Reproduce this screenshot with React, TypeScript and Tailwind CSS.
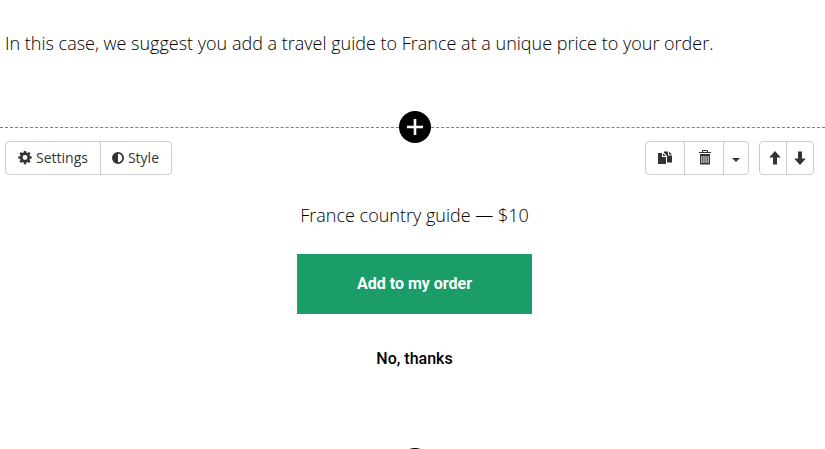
import type { ReactNode } from "react";

const shell =
  "flex h-[34px] items-stretch divide-x divide-[#cccccc] overflow-hidden rounded border border-[#cccccc] bg-white text-[#333333]";

function ToolButton({ label, width, children }: { label: string; width: string; children: ReactNode }) {
  return (
    <button type="button" aria-label={label} className={`flex items-center justify-center hover:bg-gray-100 ${width}`}>
      {children}
    </button>
  );
}

function Divider() {
  return (
    <div className="relative w-full border-t border-dashed border-[#808080]">
      <button
        type="button"
        aria-label="Add element"
        className="absolute -top-[17px] left-1/2 ml-[2px] flex size-8 -translate-x-1/2 items-center justify-center rounded-full bg-black"
      >
        <svg viewBox="0 0 16 16" className="size-4" fill="#fff">
          <path d="M6.700 0h2.600v6.700H16v2.600H9.300V16H6.700V9.300H0V6.700h6.700z" />
        </svg>
      </button>
    </div>
  );
}

function CogIcon() {
  const teeth = [0, 45, 90, 135, 180, 225, 270, 315];
  return (
    <svg viewBox="0 0 14 14" className="size-[14px]">
      <circle cx="7" cy="6.500" r="3.700" fill="none" stroke="currentColor" strokeWidth="2.500" />
      {teeth.map((a) => (
        <path key={a} d="M5.900 -0.200h2.200l.5 2.500H5.400z" fill="currentColor" transform={`rotate(${a} 7 6.500)`} />
      ))}
    </svg>
  );
}

function ContrastIcon() {
  return (
    <svg viewBox="0 0 14 14" className="size-[14px]">
      <circle cx="7" cy="7" r="5.100" fill="none" stroke="currentColor" strokeWidth="1.800" />
      <path d="M7 2a5 5 0 0 0 0 10z" fill="currentColor" />
    </svg>
  );
}

function CopyIcon() {
  return (
    <svg viewBox="0 0 16 14" className="h-[14px] w-4" fill="currentColor">
      <path d="M1 2h4v4h4v7H1z" />
      <path d="M6 2.300 8.700 5H6z" />
      <path d="M7 0.500h4v4h4V11.500h-5V4.800L7 1.800z" />
      <path d="M12 0.500 15 3.500h-3z" />
    </svg>
  );
}

function TrashIcon() {
  return (
    <svg viewBox="0 0 14 16" className="-mt-[3px] h-4 w-[14px]" fill="currentColor">
      <path d="M4 2Q4 1 5 1h4q1 0 1 1v1h3v1H1V3h3zM5 2v1h4V2z" fillRule="evenodd" />
      <path
        d="M2 5h10v10q0 .5-.6.5H2.600Q2 15.500 2 15zM3.400 7v7h.9V7zM5.500 7v7h.9V7zM7.600 7v7h.9V7zM9.700 7v7h.9V7z"
        fillRule="evenodd"
      />
    </svg>
  );
}

function ArrowIcon({ down = false }: { down?: boolean }) {
  return (
    <svg viewBox="0 0 12 14" className={`h-[14px] w-3 ${down ? "rotate-180" : ""}`} fill="currentColor">
      <path d="M6 0 11.800 6.500H8V13.500H4V6.500H0.200z" />
    </svg>
  );
}

export default function App() {
  return (
    <main className="flex h-screen flex-col overflow-hidden bg-white font-['Open_Sans','Noto_Sans',sans-serif] text-black">
      <p className="px-[5px] pt-[30px] pb-[70px] text-lg leading-[27px] font-light">
        In this case, we suggest you add a travel guide to France at a unique price to your order.
      </p>
      <Divider />
      <section className="flex shrink-0 flex-col pt-[13px] pl-[5px]">
        <div className="flex items-center justify-between pr-[11px]">
          <div className={`${shell} text-sm`}>
            <button type="button" className="flex items-center gap-1 px-3 hover:bg-gray-100">
              <CogIcon />
              Settings
            </button>
            <button type="button" className="flex items-center gap-[3px] pr-3 pl-[10px] hover:bg-gray-100">
              <ContrastIcon />
              Style
            </button>
          </div>
          <div className="flex gap-[10px]">
            <div className={shell}>
              <ToolButton label="Duplicate" width="w-[39px]">
                <CopyIcon />
              </ToolButton>
              <ToolButton label="Delete" width="w-[39px] pl-[2px]">
                <TrashIcon />
              </ToolButton>
              <ToolButton label="More actions" width="w-6">
                <svg viewBox="0 0 8 4" className="mt-[3px] h-1 w-2" fill="currentColor">
                  <path d="M0 0h8L4 4z" />
                </svg>
              </ToolButton>
            </div>
            <div className={shell}>
              <ToolButton label="Move up" width="w-[27px] pl-[3px]">
                <ArrowIcon />
              </ToolButton>
              <ToolButton label="Move down" width="w-[26px]">
                <ArrowIcon down />
              </ToolButton>
            </div>
          </div>
        </div>
        <div className="flex flex-col items-center pt-[27px] pr-[1px]">
          <p className="text-lg leading-[27px] font-light">France country guide — $10</p>
          <button
            type="button"
            className="mt-[25px] h-[60px] w-[235px] bg-[#1b9d69] font-['Roboto',sans-serif] text-base font-bold text-white"
          >
            Add to my order
          </button>
          <button type="button" className="mt-[33px] mb-[93px] font-['Roboto',sans-serif] text-base font-medium">
            No, thanks
          </button>
        </div>
      </section>
      <Divider />
    </main>
  );
}
